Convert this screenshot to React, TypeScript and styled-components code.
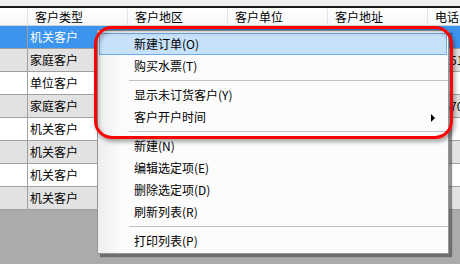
import React from "react";
import styled, { createGlobalStyle } from "styled-components";

const Global = createGlobalStyle`
  html, body { margin: 0; padding: 0; background: #ababab; }
  body { font-family: "Noto Sans CJK SC", "Noto Sans", sans-serif; }
`;

const Screen = styled.div`
  position: relative;
  width: 460px;
  height: 264px;
  overflow: hidden;
  background: #ababab;
  font-size: 12px;
  color: #000;
`;

const TopStrip = styled.div`
  height: 6px;
  background: #f0f0f0;
  border-bottom: 2px solid #1a1a1a;
`;

const Grid = styled.div`
  display: grid;
  grid-template-columns: 28px repeat(5, 100px);
  width: 528px;
`;

const HeaderCell = styled.div`
  height: 17px;
  line-height: 17px;
  padding-left: 7px;
  background: linear-gradient(#ffffff, #f6f7f9);
  border-right: 1px solid #e3e5e8;
  border-bottom: 1px solid #d5d5d5;
  white-space: nowrap;
  overflow: hidden;
`;

const Cell = styled.div<{ $bg: string; $fg: string; $first?: boolean }>`
  height: 22px;
  line-height: 22px;
  padding-left: ${(p) => (p.$first ? 0 : 2)}px;
  background: ${(p) => p.$bg};
  color: ${(p) => p.$fg};
  border-right: 1px solid #a0a0a0;
  border-bottom: 1px solid #a0a0a0;
  white-space: nowrap;
  overflow: hidden;
  box-sizing: content-box;
`;

const Menu = styled.div`
  position: absolute;
  left: 97px;
  top: 30px;
  width: 349px;
  padding: 2px 0 1px 1px;
  border: 1px solid #979797;
  background: linear-gradient(to right, #eeeeee 0px, #fafafa 22px, #fcfcfc 30px);
  box-shadow: 3px 3px 1px rgba(60, 60, 60, 0.55);
  display: flex;
  flex-direction: column;
`;

const Item = styled.div<{ $hot?: boolean }>`
  position: relative;
  height: 20px;
  line-height: 20px;
  margin-right: 1px;
  padding-left: 34px;
  border: 1px solid ${(p) => (p.$hot ? "#6aaeea" : "transparent")};
  background: ${(p) => (p.$hot ? "#c6e1f9" : "transparent")};
  white-space: nowrap;
`;

const Separator = styled.div`
  height: 7px;
  display: flex;
  align-items: center;
  padding-left: 30px;
  &::after {
    content: "";
    flex: 1;
    height: 1px;
    background: #c2c2c2;
  }
`;

const Arrow = styled.span`
  position: absolute;
  right: 11px;
  top: 7px;
  width: 0;
  height: 0;
  border-top: 4px solid transparent;
  border-bottom: 4px solid transparent;
  border-left: 4px solid #000;
`;

const Annotation = styled.div`
  position: absolute;
  left: 94px;
  top: 26px;
  width: 353px;
  height: 107px;
  border: 3px solid #ff0000;
  border-radius: 18px;
  box-shadow: 2px 3px 4px rgba(0, 0, 0, 0.35), inset 2px 3px 4px rgba(0, 0, 0, 0.25);
  pointer-events: none;
`;

const types = ["机关客户", "家庭客户", "单位客户", "家庭客户", "机关客户", "机关客户", "机关客户", "机关客户"];
const phones: Record<number, string> = { 1: "66251888", 3: "83670123" };

const menu: Array<{ label?: string; hot?: boolean; sub?: boolean; sep?: boolean }> = [
  { label: "新建订单(O)", hot: true },
  { label: "购买水票(T)" },
  { sep: true },
  { label: "显示未订货客户(Y)" },
  { label: "客户开户时间", sub: true },
  { sep: true },
  { label: "新建(N)" },
  { label: "编辑选定项(E)" },
  { label: "删除选定项(D)" },
  { label: "刷新列表(R)" },
  { sep: true },
  { label: "打印列表(P)" },
];

export default function App() {
  return (
    <Screen>
      <Global />
      <TopStrip />
      <Grid>
        <HeaderCell />
        <HeaderCell>客户类型</HeaderCell>
        <HeaderCell>客户地区</HeaderCell>
        <HeaderCell>客户单位</HeaderCell>
        <HeaderCell>客户地址</HeaderCell>
        <HeaderCell>电话</HeaderCell>
        {types.map((t, i) => {
          const sel = i === 0;
          const bg = sel ? "#3b94ee" : i % 2 === 1 ? "#e2e2e2" : "#ffffff";
          const fg = sel ? "#ffffff" : "#000000";
          return (
            <React.Fragment key={i}>
              <Cell $bg={bg} $fg={fg} $first />
              <Cell $bg={bg} $fg={fg}>{t}</Cell>
              <Cell $bg={bg} $fg={fg} />
              <Cell $bg={bg} $fg={fg} />
              <Cell $bg={bg} $fg={fg} />
              <Cell $bg={bg} $fg={fg}>{phones[i] ?? ""}</Cell>
            </React.Fragment>
          );
        })}
      </Grid>
      <Menu>
        {menu.map((m, i) =>
          m.sep ? (
            <Separator key={i} />
          ) : (
            <Item key={i} $hot={m.hot}>
              {m.label}
              {m.sub && <Arrow />}
            </Item>
          )
        )}
      </Menu>
      <Annotation />
    </Screen>
  );
}
